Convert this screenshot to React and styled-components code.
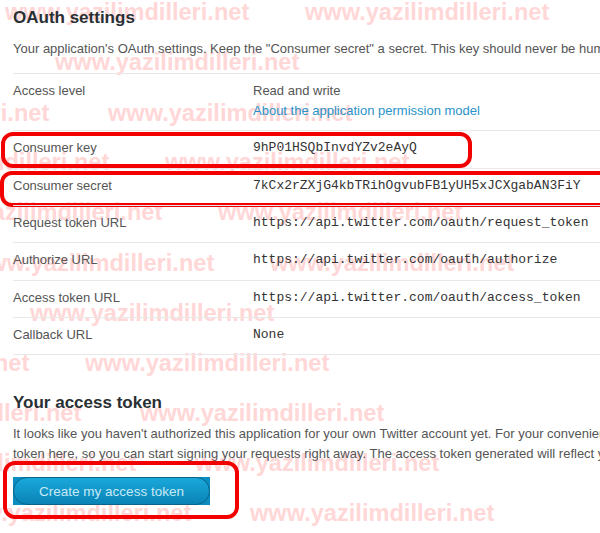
import React from 'react';
import styled, { createGlobalStyle } from 'styled-components';

const GlobalStyle = createGlobalStyle`
  body {
    margin: 0;
    background: #fff;
    font-family: "Liberation Sans", Arial, sans-serif;
  }
`;

const settings = [
  { label: 'Access level', value: 'Read and write', link: 'About the application permission model' },
  {
    label: 'Consumer key',
    value: '9hP01HSQbInvdYZv2eAyQ',
    mono: true,
    mark: { left: -12, top: 1, width: 471, height: 36 },
  },
  {
    label: 'Consumer secret',
    value: '7kCx2rZXjG4kbTRihOgvubFB1yUH5xJCXgabAN3FiY',
    mono: true,
    mark: { left: -13, top: 2, width: 612, height: 36 },
  },
  { label: 'Request token URL', value: 'https://api.twitter.com/oauth/request_token', mono: true },
  { label: 'Authorize URL', value: 'https://api.twitter.com/oauth/authorize', mono: true },
  { label: 'Access token URL', value: 'https://api.twitter.com/oauth/access_token', mono: true },
  { label: 'Callback URL', value: 'None', mono: true },
];

// watermark rows: [centre y, ...left x]
const watermarkRows = [
  [12, 5, 305],
  [62, 55],
  [113, -195, 108],
  [162, -135, 165],
  [212, -82, 218],
  [263, -30, 270],
  [313, 30],
  [363, -215, 85],
  [413, -163, 140],
  [463, -108, 195],
  [513, -53, 250],
];

const App = () => {
  return (
    <Page>
      <GlobalStyle />
      <Watermarks>
        {watermarkRows.map(([y, ...xs]) =>
          xs.map((x) => (
            <Mark key={`${y}-${x}`} $x={x} $y={y - 13}>
              www.yazilimdilleri.net
            </Mark>
          ))
        )}
      </Watermarks>

      <Content>
        <Heading>OAuth settings</Heading>
        <Description>
          Your application's OAuth settings. Keep the "Consumer secret" a secret. This key should never be human-readable in your application.
        </Description>

        <SettingsList>
          {settings.map((item) => (
            <Row key={item.label}>
              <Label>{item.label}</Label>
              <Value $mono={item.mono}>
                {item.value}
                {item.link && <Link href="#">{item.link}</Link>}
              </Value>
              {item.mark && (
                <Highlight
                  $left={item.mark.left}
                  $top={item.mark.top}
                  $width={item.mark.width}
                  $height={item.mark.height}
                />
              )}
            </Row>
          ))}
        </SettingsList>

        <TokenHeading>Your access token</TokenHeading>
        <Paragraph>
          <Line>
            It looks like you haven't authorized this application for your own Twitter account yet. For your convenience, we give you the opportunity to create your OAuth access
          </Line>
          <Line>
            token here, so you can start signing your requests right away. The access token generated will reflect your application's current permission level.
          </Line>
        </Paragraph>

        <ButtonFrame>
          <CreateButton>Create my access token</CreateButton>
          <Highlight $left={-10} $top={-16} $width={236} $height={58} />
        </ButtonFrame>
      </Content>
    </Page>
  );
};

const Page = styled.div`
  position: relative;
  width: 100%;
  min-height: 533px;
  overflow: hidden;
`;

const Watermarks = styled.div`
  position: absolute;
  inset: 0;
  pointer-events: none;
  z-index: 0;
`;

const Mark = styled.span`
  position: absolute;
  left: ${(p) => p.$x}px;
  top: ${(p) => p.$y}px;
  font-size: 23.6px;
  line-height: 26px;
  font-weight: bold;
  color: #ffd7d7;
  white-space: nowrap;
`;

const Content = styled.div`
  position: relative;
  z-index: 1;
  padding: 7px 0 40px 13px;
  color: #555;
  font-size: 13px;
`;

const Heading = styled.h2`
  margin: 0;
  font-size: 17px;
  line-height: 22px;
  font-weight: bold;
  color: #292f33;
`;

const Description = styled.p`
  margin: 10px 0 14px;
  line-height: 20px;
  white-space: nowrap;
`;

const SettingsList = styled.div`
  width: 900px;
  border-bottom: 1px solid #e8e8e8;
`;

const Row = styled.div`
  position: relative;
  display: grid;
  grid-template-columns: 240px 1fr;
  padding: 7px 0 9.33px;
  border-top: 1px solid #e8e8e8;
  line-height: 20px;
`;

const Label = styled.div`
  color: #555;
`;

const Value = styled.div`
  display: flex;
  flex-direction: column;
  white-space: nowrap;
  color: ${(p) => (p.$mono ? '#333' : '#555')};
  font-family: ${(p) =>
    p.$mono ? '"Liberation Mono", "Courier New", monospace' : '"Liberation Sans", Arial, sans-serif'};
  font-size: 13px;
`;

const Link = styled.a`
  color: #2a93c9;
  text-decoration: none;
`;

const Highlight = styled.div`
  position: absolute;
  left: ${(p) => p.$left}px;
  top: ${(p) => p.$top}px;
  width: ${(p) => p.$width}px;
  height: ${(p) => p.$height}px;
  box-sizing: border-box;
  border: 4px solid #f20000;
  border-radius: 12px;
  pointer-events: none;
`;

const TokenHeading = styled(Heading)`
  margin-top: 37px;
`;

const Paragraph = styled.div`
  margin-top: 10px;
  line-height: 20px;
`;

const Line = styled.div`
  white-space: nowrap;
`;

const ButtonFrame = styled.div`
  position: relative;
  width: 197px;
  height: 28px;
  margin-top: 13px;
  background: #0b8dc0;
`;

const CreateButton = styled.button`
  display: block;
  width: 100%;
  height: 100%;
  padding: 0;
  border: 1px solid #0a6488;
  border-radius: 14px;
  background: linear-gradient(#1aa8db, #0a83b5);
  color: #c8e9f6;
  font-family: "Liberation Sans", Arial, sans-serif;
  font-size: 13.5px;
  cursor: pointer;
`;

export default App;
